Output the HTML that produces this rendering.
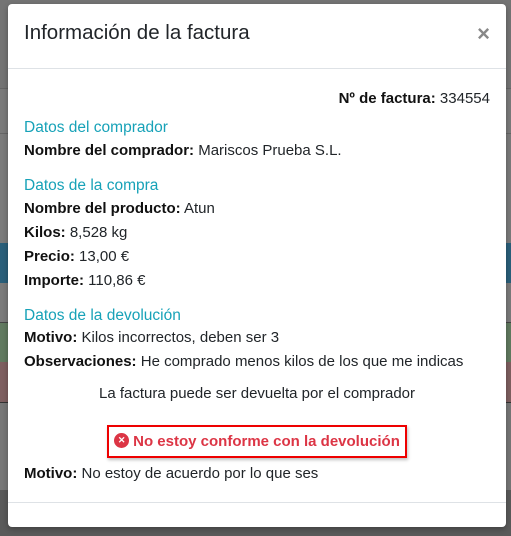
<!DOCTYPE html>
<html><head><meta charset="utf-8"><style>
*{margin:0;padding:0;box-sizing:border-box}
body{width:511px;height:536px;overflow:hidden;background:#777;font-family:"Liberation Sans",Roboto,sans-serif;position:relative;color:#212529}
.bg{position:absolute;left:0;width:511px}
.modal{position:absolute;left:8px;top:4px;width:498px;height:523px;background:#fff;border-radius:4px;box-shadow:0 2px 6px rgba(0,0,0,.3)}
.hdr{height:65px;border-bottom:1px solid #dee2e6;position:relative}
.hdr h5{position:absolute;left:16px;top:17px;font-size:20.5px;font-weight:normal;color:#212529}
.close{position:absolute;right:16px;top:17px;font-size:22px;font-weight:bold;color:#888}
.body{padding:0 16px;font-size:15px;line-height:24px}
.r{text-align:right;margin-top:18px}
.t{color:#17a2b8;font-size:15.5px;margin-top:10px;line-height:22px}
b{font-weight:bold;color:#111}
.c{text-align:center}
.btn{display:inline-block;border:2px solid #e00;color:#dc3545;font-weight:bold;padding:2px 5px 1px;font-size:15px;line-height:26px;box-shadow:1px 2px 3px rgba(0,0,0,.25)}
.ic{display:inline-block;width:15px;height:15px;border-radius:50%;background:#dc3545;color:#fff;font-size:9px;line-height:15px;text-align:center;vertical-align:middle;position:relative;top:-2px;margin-right:4px}
.ftr{position:absolute;left:0;right:0;top:498px;border-top:1px solid #dee2e6}
</style></head><body>
<div class="bg" style="top:0;height:88px;background:#747474"></div>
<div class="bg" style="top:88px;height:45px;background:#7a7a7a;border-top:1px solid #666"></div>
<div class="bg" style="top:133px;height:110px;background:#7b7b7b;border-top:1px solid #666"></div>
<div class="bg" style="top:243px;height:40px;background:#2a5f7a"></div>
<div class="bg" style="top:283px;height:39px;background:#7b7b7b"></div>
<div class="bg" style="top:322px;height:40px;background:#617a60;border-top:1px solid #444"></div>
<div class="bg" style="top:362px;height:40px;background:#7e5f60"></div>
<div class="bg" style="top:402px;height:88px;background:#777;border-top:1px solid #333"></div>
<div class="bg" style="top:490px;height:46px;background:#5a5a5a"></div>
<div class="modal">
<div class="hdr"><h5>Información de la factura</h5><span class="close">×</span></div>
<div class="body">
<div class="r"><b>Nº de factura:</b> 334554</div>
<div class="t" style="margin-top:6px">Datos del comprador</div>
<div><b>Nombre del comprador:</b> Mariscos Prueba S.L.</div>
<div class="t" style="margin-top:12px">Datos de la compra</div>
<div><b>Nombre del producto:</b> Atun</div>
<div><b>Kilos:</b> 8,528 kg</div>
<div><b>Precio:</b> 13,00 €</div>
<div><b>Importe:</b> 110,86 €</div>
<div class="t" style="margin-top:13px;line-height:20px">Datos de la devolución</div>
<div><b>Motivo:</b> Kilos incorrectos, deben ser 3</div>
<div><b>Observaciones:</b> He comprado menos kilos de los que me indicas</div>
<div class="c" style="margin-top:8px">La factura puede ser devuelta por el comprador</div>
<div class="c" style="margin-top:19px"><span class="btn"><span class="ic">✕</span>No estoy conforme con la devolución</span></div>
<div style="margin-top:4px"><b>Motivo:</b> No estoy de acuerdo por lo que ses</div>
</div>
<div class="ftr"></div>
</div>
</body></html>
